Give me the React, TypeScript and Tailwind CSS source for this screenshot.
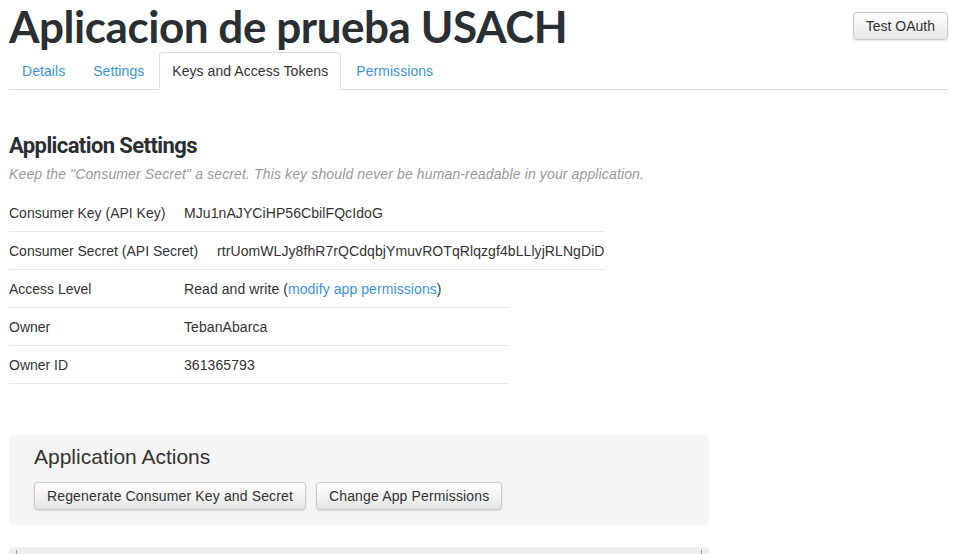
import React from "react";

const tabs = ["Details", "Settings", "Keys and Access Tokens", "Permissions"];

const Row = ({ label, value, wide, labelW }: { label: string; value: React.ReactNode; wide?: boolean; labelW: string }) => (
    <div className={`flex items-center h-[38px] border-b border-[#e8e8e8] ${wide ? "w-[596px]" : "w-[500px]"}`}>
        <span className={`${labelW} shrink-0`}>{label}</span>
        <span className="whitespace-nowrap tracking-[0.08px]">{value}</span>
    </div>
);

const Btn = ({ children, wide }: { children: React.ReactNode; wide?: boolean }) => (
    <button
        type="button"
        className={`h-[28px] px-3 text-[14px] text-[#333] rounded-[4px] border border-[#c8c8c8] bg-gradient-to-b from-white to-[#e6e6e6] shadow-[0_1px_2px_rgba(0,0,0,0.12)] whitespace-nowrap ${wide ? "tracking-[0.14px]" : ""}`}
    >
        {children}
    </button>
);

export default function App() {
    return (
        <div className="w-[954px] h-[554px] overflow-hidden bg-white text-[#333] text-[14px] leading-[20px] font-['Liberation_Sans',Arial,sans-serif]">
            <div className="w-[939px] ml-[9px]">
                <div className="flex items-start justify-between h-[52px]">
                    <h1 className="font-['Lato',sans-serif] font-bold text-[44px] leading-[52px] text-[#292f33] tracking-[-0.45px]">
                        Aplicacion de prueba USACH
                    </h1>
                    <div className="mt-[12px]">
                        <Btn>Test OAuth</Btn>
                    </div>
                </div>

                <div className="flex border-b border-[#dddddd]">
                    {tabs.map((t, i) => {
                        const active = i === 2;
                        return (
                            <div
                                key={t}
                                className={`-mb-px mr-[2px] px-3 py-[8px] border rounded-t-[4px] leading-[20px] tracking-[0.06px] ${active ? "bg-white border-[#dddddd] border-b-white text-[#333]" : "border-transparent text-[#3b94d9]"}`}
                            >
                                {t}
                            </div>
                        );
                    })}
                </div>

                <h2 className="mt-[43px] font-['Roboto',sans-serif] font-bold text-[22px] leading-[26px] tracking-[-0.6px] text-[#292f33]">
                    Application Settings
                </h2>
                <p className="mt-[5px] italic text-[#999] tracking-[0.13px]">
                    Keep the "Consumer Secret" a secret. This key should never be human-readable in your application.
                </p>

                <div className="mt-[10px]">
                    <Row wide labelW="w-[175px]" label="Consumer Key (API Key)" value="MJu1nAJYCiHP56CbilFQcIdoG" />
                    <Row wide labelW="w-[208px]" label="Consumer Secret (API Secret)" value="rtrUomWLJy8fhR7rQCdqbjYmuvROTqRlqzgf4bLLlyjRLNgDiD" />
                    <Row
                        labelW="w-[175px]"
                        label="Access Level"
                        value={
                            <>
                                Read and write (<span className="text-[#3b94d9]">modify app permissions</span>)
                            </>
                        }
                    />
                    <Row labelW="w-[175px]" label="Owner" value="TebanAbarca" />
                    <Row labelW="w-[175px]" label="Owner ID" value="361365793" />
                </div>

                <div className="mt-[51px] w-[700px] rounded-[4px] bg-[#f5f5f5] pl-[25px] pt-[10px] pb-[15px]">
                    <h3 className="text-[21px] leading-[24px] text-[#333]">Application Actions</h3>
                    <div className="flex gap-[10px] mt-[13px]">
                        <Btn wide>Regenerate Consumer Key and Secret</Btn>
                        <Btn wide>Change App Permissions</Btn>
                    </div>
                </div>

                <div className="mt-[22px] w-[700px] h-[20px] rounded-t-[4px] bg-[#eeeeee] flex justify-between px-[7px] pt-[3px]">
                    <span className="w-px h-[4px] bg-[#999]" />
                    <span className="w-px h-[4px] bg-[#999]" />
                </div>
            </div>
        </div>
    );
}
